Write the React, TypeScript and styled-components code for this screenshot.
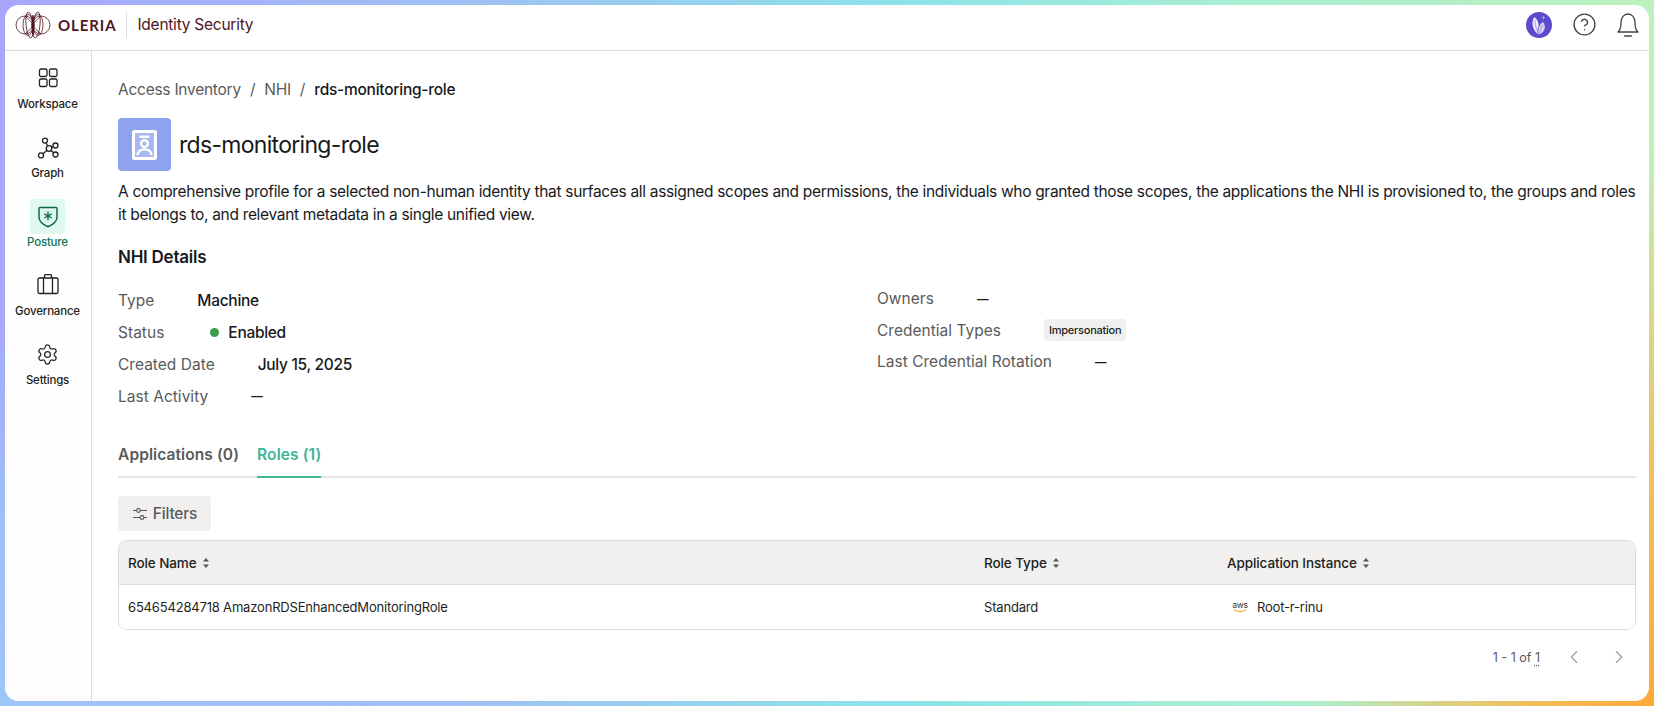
import React from 'react';
import styled, { createGlobalStyle } from 'styled-components';
import { ChevronLeft, ChevronRight, CircleHelp, Settings } from 'lucide-react';

const GlobalStyle = createGlobalStyle`
  html, body { margin: 0; padding: 0; height: 100%; }
  body { font-family: Inter, "Liberation Sans", sans-serif; color: #16181a; background: #fff; }
  * { box-sizing: border-box; }
`;

const LogoMark: React.FC = () => (
  <svg width="36" height="28" viewBox="0 0 36 28" fill="none" stroke="#4f1420" strokeWidth="0.8">
    <circle cx="10" cy="14" r="9" />
    <circle cx="26" cy="14" r="9" />
    <ellipse cx="13" cy="14" rx="5" ry="10.5" />
    <ellipse cx="23" cy="14" rx="5" ry="10.5" />
    <ellipse cx="14.5" cy="14" rx="3.5" ry="13" transform="rotate(-6 14.5 14)" />
    <ellipse cx="21.5" cy="14" rx="3.5" ry="13" transform="rotate(6 21.5 14)" />
    <path d="M18 4 C16.4 9 16.4 19 18 24 C19.6 19 19.6 9 18 4Z" fill="#4f1420" />
    <path d="M10 5 L18 12.5 L26 5 M10 23 L18 15.5 L26 23" />
  </svg>
);

const AvatarMark: React.FC = () => (
  <svg width="26" height="26" viewBox="0 0 26 26">
    <circle cx="13" cy="13" r="13" fill="#5b4bcb" />
    <path d="M8.5 5 C5 9 6 17 11.5 22 C14 15 13 9 8.5 5Z" fill="#efeafd" />
    <path d="M17 9.5 C13 12 11 18 12 23 C18 22 22 15 17 9.5Z" fill="#d8d2f7" stroke="#5b4bcb" strokeWidth="0.8" />
    <path d="M8.8 8 C9.2 12 10 16 11.4 19 M16.4 13 C15 16 14 18.5 13.4 21.4" fill="none" stroke="#7a6cd8" strokeWidth="0.6" />
    <path d="M17.5 3.5 l.6 1.6 1.6.6 -1.6.6 -.6 1.6 -.6-1.6 -1.6-.6 1.6-.6Z" fill="#a9a0ea" />
  </svg>
);

const BellIcon: React.FC = () => (
  <svg width="24" height="26" viewBox="0 0 24 26" fill="none" stroke="#444" strokeWidth="1.3" strokeLinejoin="round">
    <path d="M2 20 C4.5 18 5 14.5 5 10.5 C5 5.5 8 2 12 2 C16 2 19 5.5 19 10.5 C19 14.5 19.5 18 22 20 Z" />
    <path d="M8.5 24 H15.5" strokeLinecap="round" />
  </svg>
);

const WorkspaceIcon: React.FC = () => (
  <svg width="22" height="22" viewBox="0 2 22 22" fill="none" stroke="#222" strokeWidth="1.3">
    <rect x="2.5" y="3" width="7.5" height="7.5" rx="1.5" />
    <rect x="12.5" y="3" width="7.5" height="7.5" rx="1.5" />
    <rect x="2.5" y="13" width="7.5" height="7.5" rx="1.5" />
    <rect x="12.5" y="13" width="7.5" height="7.5" rx="1.5" />
  </svg>
);

const GraphIcon: React.FC = () => (
  <svg width="24" height="24" viewBox="0 0 24 24" fill="none" stroke="#222" strokeWidth="1.3">
    <circle cx="13" cy="12.5" r="2.8" />
    <circle cx="9" cy="4.6" r="2.5" />
    <circle cx="19.5" cy="9.5" r="2.5" />
    <circle cx="19.5" cy="18.5" r="2.5" />
    <circle cx="5" cy="19.4" r="2.5" />
    <path d="M10 6.9 L11.8 10 M15.7 11.5 L17.2 10.6 M15 14.5 L17.6 16.8 M10.9 14.4 L6.9 17.8" />
  </svg>
);

const PostureIcon: React.FC = () => (
  <svg width="24" height="24" viewBox="0 0 24 24" fill="none" stroke="#14664f" strokeWidth="1.5">
    <path d="M3 3.5 C3 3 3.4 2.6 4 2.6 H20 C20.6 2.6 21 3 21 3.5 V12 C21 16.5 16.5 19.8 12 21.8 C7.5 19.8 3 16.5 3 12 Z" strokeLinejoin="round" />
    <path d="M12 6.6 V15.2 M8.2 8.8 L15.8 13 M15.8 8.8 L8.2 13" strokeWidth="1.4" />
  </svg>
);

const GovernanceIcon: React.FC = () => (
  <svg width="24" height="24" viewBox="0 2 24 24" fill="none" stroke="#222" strokeWidth="1.3">
    <rect x="2" y="6" width="20" height="15.5" rx="1.5" />
    <path d="M7.5 6 V21.5 M16.5 6 V21.5 M8.5 6 V3.8 C8.5 3 9 2.5 9.8 2.5 H14.2 C15 2.5 15.5 3 15.5 3.8 V6" />
  </svg>
);

const BadgeIcon: React.FC = () => (
  <svg width="25" height="30" viewBox="0 0 25 30" fill="none" stroke="#fff">
    <rect x="1.5" y="1.5" width="22" height="27" rx="1" strokeWidth="3" fill="#a9b8f3" />
    <path d="M7.5 6.8 H17.5" strokeWidth="2.4" />
    <circle cx="12.5" cy="13.6" r="3.4" strokeWidth="2.4" />
    <path d="M5.5 25 C6 20.5 9 19.4 12.5 19.4 C16 19.4 19 20.5 19.5 25" strokeWidth="2.4" />
  </svg>
);

const FilterIcon: React.FC = () => (
  <svg width="16" height="16" viewBox="0 0 16 16" fill="none" stroke="#555" strokeWidth="1.1">
    <path d="M1 4.5 H4.5 M8.5 4.5 H15 M1 11.5 H8 M12 11.5 H15" />
    <circle cx="6.5" cy="4.5" r="1.9" />
    <circle cx="10" cy="11.5" r="1.9" />
  </svg>
);

const SortIcon: React.FC = () => (
  <svg width="8" height="12" viewBox="0 0 8 12" fill="#555">
    <path d="M4 1 L7 4.4 H1 Z M4 11 L1 7.6 H7 Z" />
  </svg>
);

const Frame = styled.div`
  height: 706px;
  width: 1654px;
  padding: 5px;
  overflow: hidden;
  background:
    radial-gradient(ellipse 340px 560px at 100% 100%, #fda938 0%, rgba(253, 180, 70, 0.75) 45%, rgba(253, 200, 100, 0) 100%),
    radial-gradient(ellipse 500px 420px at 0% 100%, #9ec6f7 0%, rgba(158, 198, 247, 0.7) 50%, rgba(158, 198, 247, 0) 100%),
    linear-gradient(90deg, #a7a6fc 0%, #9fc0f4 28%, #8ce3e9 55%, #a8eed2 75%, #bdf1bd 100%);
`;

const Shell = styled.div`
  height: 100%;
  background: #fff;
  border-radius: 14px;
  display: flex;
  flex-direction: column;
  overflow: hidden;
`;

const TopBar = styled.header`
  height: 46px;
  flex: none;
  display: flex;
  align-items: center;
  justify-content: space-between;
  padding: 0 9px 6px 10px;
  border-bottom: 1px solid #dcdcdc;
`;

const Brand = styled.div`
  display: flex;
  align-items: center;
`;

const BrandName = styled.span`
  font-family: Lato, sans-serif;
  font-weight: 700;
  font-size: 15px;
  letter-spacing: 0.9px;
  color: #4f1420;
  margin-left: 7px;
`;

const BrandProduct = styled.span`
  font-size: 15.5px;
  letter-spacing: -0.25px;
  color: #4f1420;
  margin-left: 10px;
  padding-left: 10px;
  border-left: 1px solid #ddd;
  line-height: 26px;
`;

const TopActions = styled.div`
  display: flex;
  align-items: center;
  gap: 19.5px;
  color: #444;
`;

const Body = styled.div`
  flex: 1;
  display: flex;
  min-height: 0;
`;

const Sidebar = styled.nav`
  width: 87px;
  flex: none;
  padding: 10px 1px 0 0;
  border-right: 1px solid #dcdcdc;
  display: flex;
  flex-direction: column;
  background: #fdfefd;
`;

const NavItem = styled.div<{ $active?: boolean }>`
  height: 69px;
  display: flex;
  flex-direction: column;
  align-items: center;
  font-size: 11.5px;
  font-weight: 500;
  letter-spacing: -0.2px;
  color: ${(p) => (p.$active ? '#14745a' : '#1d1f21')};
`;

const NavIcon = styled.div<{ $active?: boolean }>`
  width: 35px;
  height: 35px;
  border-radius: 4px;
  display: flex;
  align-items: center;
  justify-content: center;
  margin-bottom: 1px;
  background: ${(p) => (p.$active ? '#dff8f0' : 'transparent')};
`;

const Main = styled.main`
  flex: 1;
  min-width: 0;
  padding: 27px 13px 0 26px;
`;

const Breadcrumb = styled.div`
  display: flex;
  gap: 9px;
  font-size: 15.5px;
  line-height: 24px;
  letter-spacing: -0.25px;
  color: #5a5a5a;
`;

const Crumb = styled.span<{ $current?: boolean }>`
  color: ${(p) => (p.$current ? '#17191b' : 'inherit')};
  font-weight: ${(p) => (p.$current ? 500 : 400)};
`;

const TitleRow = styled.div`
  display: flex;
  align-items: center;
  gap: 8px;
  margin-top: 16px;
`;

const TitleTile = styled.div`
  width: 53px;
  height: 53px;
  border-radius: 4px;
  background: #8ea2ee;
  display: flex;
  align-items: center;
  justify-content: center;
`;

const Title = styled.h1`
  margin: 0;
  font-size: 23px;
  font-weight: 400;
  letter-spacing: -0.7px;
  color: #17191b;
`;

const Description = styled.p`
  margin: 9px 0 0;
  font-size: 15.5px;
  line-height: 23px;
  letter-spacing: -0.32px;
  color: #17191b;
`;

const SectionTitle = styled.h2`
  margin: 19px 0 0;
  font-size: 17px;
  line-height: 24px;
  font-weight: 600;
  letter-spacing: -0.25px;
  color: #17191b;
`;

const DetailsGrid = styled.div`
  display: grid;
  grid-template-columns: 1fr 1fr;
  margin-top: 15px;
`;

const DetailColumn = styled.div<{ $tight?: boolean }>`
  display: grid;
  align-content: start;
  grid-auto-rows: ${(p) => (p.$tight ? '31.5px' : '32px')};
  margin-top: ${(p) => (p.$tight ? '-1px' : '0')};
`;

const DetailRow = styled.div`
  display: flex;
  align-items: center;
  gap: 43px;
  font-size: 15.5px;
`;

const DetailLabel = styled.span`
  color: #5a5a5a;
  letter-spacing: 0.02px;
`;

const DetailValue = styled.span`
  color: #17191b;
  font-weight: 500;
  letter-spacing: -0.3px;
`;

const EmptyValue = styled.span`
  color: #17191b;
  font-size: 11.5px;
  font-weight: 600;
`;

const StatusValue = styled(DetailValue)`
  display: flex;
  align-items: center;
  gap: 9px;
  margin-left: 3px;
`;

const StatusDot = styled.span`
  width: 9px;
  height: 9px;
  border-radius: 50%;
  background: #3d9d4c;
`;

const Tag = styled.span`
  font-size: 11px;
  font-weight: 500;
  letter-spacing: -0.25px;
  padding: 3px 5px;
  line-height: 16px;
  background: #f1f0ef;
  border-radius: 3px;
  color: #1d1f21;
`;

const Tabs = styled.div`
  display: flex;
  gap: 18px;
  margin-top: 27px;
  height: 39px;
  border-bottom: 2px solid #e4e4e4;
`;

const Tab = styled.div<{ $active?: boolean }>`
  height: 39px;
  line-height: 32px;
  font-size: 15.5px;
  font-weight: 600;
  letter-spacing: 0.1px;
  color: ${(p) => (p.$active ? '#3fb597' : '#5a5a5a')};
  border-bottom: 2px solid ${(p) => (p.$active ? '#3fb597' : 'transparent')};
`;

const FilterButton = styled.button`
  margin-top: 18px;
  width: 93px;
  height: 35px;
  display: flex;
  align-items: center;
  justify-content: center;
  gap: 5px;
  border: 0;
  border-radius: 4px;
  background: #f1f0ef;
  font: inherit;
  font-size: 15.5px;
  font-weight: 500;
  letter-spacing: -0.2px;
  color: #5a5a5a;
`;

const Table = styled.div`
  margin-top: 9px;
  border: 1px solid #dcdcdc;
  border-radius: 9px;
  overflow: hidden;
`;

const TableRow = styled.div<{ $head?: boolean }>`
  display: grid;
  grid-template-columns: 856px 243px 1fr;
  align-items: center;
  padding-left: 9px;
  height: 44px;
  font-size: ${(p) => (p.$head ? '13.5px' : '13px')};
  letter-spacing: ${(p) => (p.$head ? '-0.1px' : '-0.18px')};
  font-weight: ${(p) => (p.$head ? 500 : 400)};
  background: ${(p) => (p.$head ? '#f1f0ef' : '#fff')};
  border-bottom: ${(p) => (p.$head ? '1px solid #dcdcdc' : '0')};
  color: #1d1f21;
`;

const HeadCell = styled.div`
  display: flex;
  align-items: center;
  gap: 5px;
`;

const AppCell = styled.div`
  display: flex;
  align-items: center;
  gap: 9px;
  padding-left: 5px;
`;

const AwsLogo = styled.span`
  width: 16px;
  display: flex;
  flex-direction: column;
  align-items: center;
  font-size: 8.5px;
  line-height: 6px;
  color: #333;
  svg { display: block; }
`;

const Pager = styled.div`
  display: flex;
  justify-content: flex-end;
  align-items: center;
  height: 54px;
  font-size: 12.5px;
  color: #5a5a5a;
  padding-right: 6px;
`;

const PagerTotal = styled.span`
  text-decoration: underline dotted;
  text-underline-offset: 3px;
`;

const PagerButton = styled.span`
  display: flex;
  color: #999;
  margin-left: 23px;
`;

const columns = ['Role Name', 'Role Type', 'Application Instance'];

const App: React.FC = () => {
  return (
    <Frame>
      <GlobalStyle />
      <Shell>
        <TopBar>
          <Brand>
            <LogoMark />
            <BrandName>OLERIA</BrandName>
            <BrandProduct>Identity Security</BrandProduct>
          </Brand>
          <TopActions>
            <AvatarMark />
            <CircleHelp size={25} strokeWidth={1.3} />
            <BellIcon />
          </TopActions>
        </TopBar>
        <Body>
          <Sidebar>
            <NavItem>
              <NavIcon><WorkspaceIcon /></NavIcon>
              Workspace
            </NavItem>
            <NavItem>
              <NavIcon><GraphIcon /></NavIcon>
              Graph
            </NavItem>
            <NavItem $active>
              <NavIcon $active><PostureIcon /></NavIcon>
              Posture
            </NavItem>
            <NavItem>
              <NavIcon><GovernanceIcon /></NavIcon>
              Governance
            </NavItem>
            <NavItem>
              <NavIcon><Settings size={23} strokeWidth={1.3} color="#222" /></NavIcon>
              Settings
            </NavItem>
          </Sidebar>
          <Main>
            <Breadcrumb>
              <Crumb>Access Inventory</Crumb>
              <Crumb>/</Crumb>
              <Crumb>NHI</Crumb>
              <Crumb>/</Crumb>
              <Crumb $current>rds-monitoring-role</Crumb>
            </Breadcrumb>
            <TitleRow>
              <TitleTile><BadgeIcon /></TitleTile>
              <Title>rds-monitoring-role</Title>
            </TitleRow>
            <Description>
              A comprehensive profile for a selected non-human identity that surfaces all assigned scopes and permissions, the individuals who granted those scopes, the applications the NHI is provisioned to, the groups and roles it belongs to, and relevant metadata in a single unified view.
            </Description>
            <SectionTitle>NHI Details</SectionTitle>
            <DetailsGrid>
              <DetailColumn>
                <DetailRow><DetailLabel>Type</DetailLabel><DetailValue>Machine</DetailValue></DetailRow>
                <DetailRow><DetailLabel>Status</DetailLabel><StatusValue><StatusDot />Enabled</StatusValue></DetailRow>
                <DetailRow><DetailLabel>Created Date</DetailLabel><DetailValue>July 15, 2025</DetailValue></DetailRow>
                <DetailRow><DetailLabel>Last Activity</DetailLabel><EmptyValue>—</EmptyValue></DetailRow>
              </DetailColumn>
              <DetailColumn $tight>
                <DetailRow><DetailLabel>Owners</DetailLabel><EmptyValue>—</EmptyValue></DetailRow>
                <DetailRow><DetailLabel>Credential Types</DetailLabel><Tag>Impersonation</Tag></DetailRow>
                <DetailRow><DetailLabel>Last Credential Rotation</DetailLabel><EmptyValue>—</EmptyValue></DetailRow>
              </DetailColumn>
            </DetailsGrid>
            <Tabs>
              <Tab>Applications (0)</Tab>
              <Tab $active>Roles (1)</Tab>
            </Tabs>
            <FilterButton><FilterIcon />Filters</FilterButton>
            <Table>
              <TableRow $head>
                {columns.map((c) => (
                  <HeadCell key={c}>{c}<SortIcon /></HeadCell>
                ))}
              </TableRow>
              <TableRow>
                <div>654654284718 AmazonRDSEnhancedMonitoringRole</div>
                <div>Standard</div>
                <AppCell>
                  <AwsLogo>
                    aws
                    <svg width="16" height="5" viewBox="0 0 15 5" fill="none" stroke="#f29100" strokeWidth="1">
                      <path d="M1 1 C4 4 10 4.4 14 1.4" />
                    </svg>
                  </AwsLogo>
                  Root-r-rinu
                </AppCell>
              </TableRow>
            </Table>
            <Pager>
              <span>1 - 1 of <PagerTotal>1</PagerTotal></span>
              <PagerButton><ChevronLeft size={22} strokeWidth={1.2} /></PagerButton>
              <PagerButton><ChevronRight size={22} strokeWidth={1.2} /></PagerButton>
            </Pager>
          </Main>
        </Body>
      </Shell>
    </Frame>
  );
};

export default App;
